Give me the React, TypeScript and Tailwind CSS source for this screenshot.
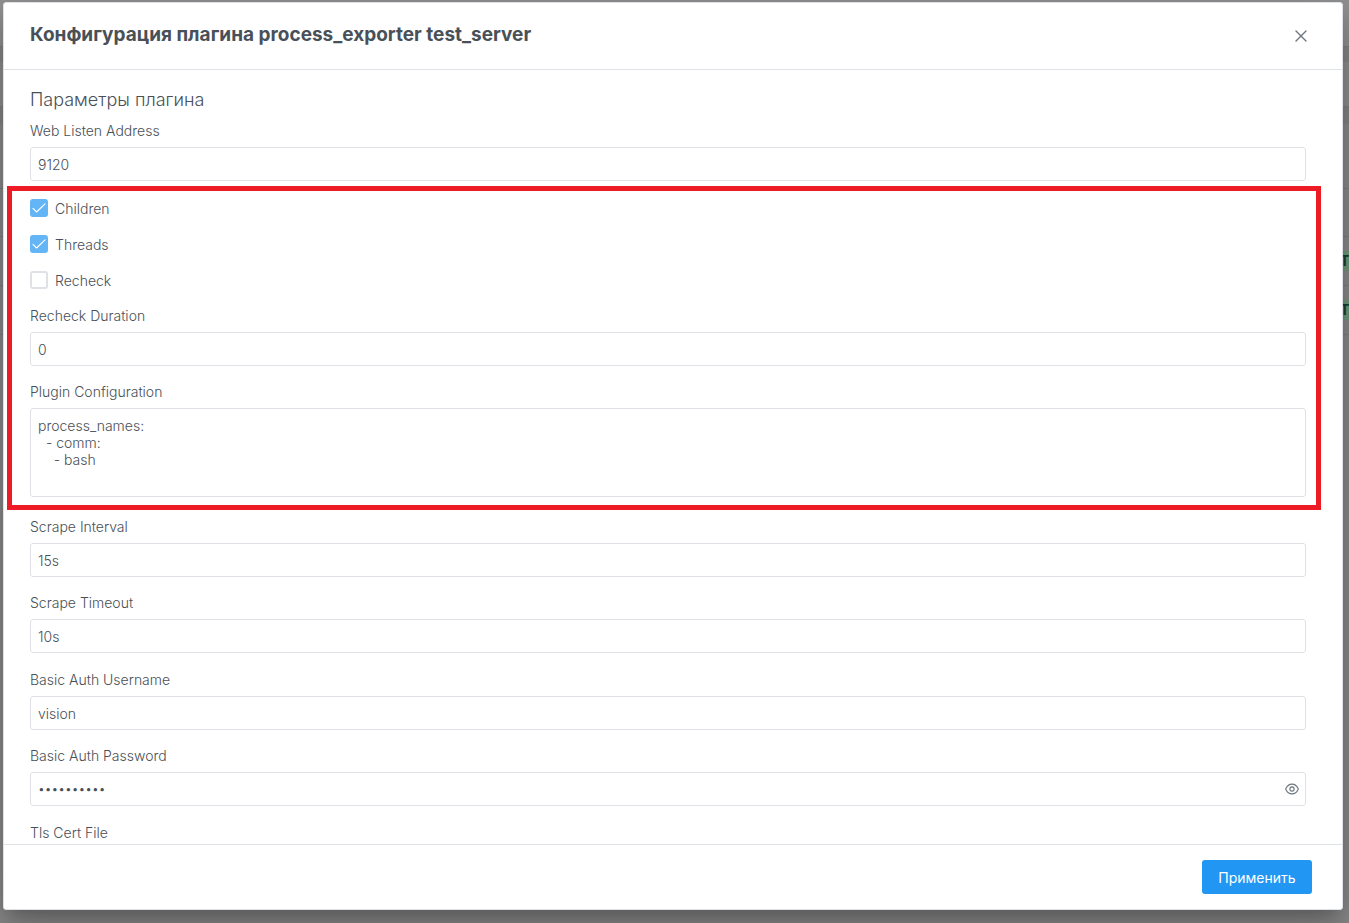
import { useState } from "react";

const inputClass =
  "block h-[34px] w-full rounded-[3px] border border-[#dee2e6] bg-white px-[7px] text-[14px] text-[#495057] outline-none";

function Field({ id, label, value }: { id: string; label: string; value: string }) {
  return (
    <div>
      <label htmlFor={id} className="mb-[6px] block leading-5">
        {label}
      </label>
      <input id={id} type="text" defaultValue={value} className={inputClass} />
    </div>
  );
}

function Check({ label, checked = false }: { label: string; checked?: boolean }) {
  return (
    <label className="flex h-[18px] w-fit items-center gap-[7px]">
      <span className="grid size-[18px]">
        <input
          type="checkbox"
          defaultChecked={checked}
          className="peer col-start-1 row-start-1 size-[18px] appearance-none rounded-[3px] border-2 border-[#dee2e6] bg-white checked:border-[#64b5f6] checked:bg-[#64b5f6]"
        />
        <svg
          viewBox="0 0 18 18"
          className="pointer-events-none invisible col-start-1 row-start-1 size-[18px] peer-checked:visible"
          fill="none"
          stroke="#fff"
          strokeWidth="1.1"
          strokeLinecap="round"
          strokeLinejoin="round"
        >
          <path d="M3 9.3 L6.6 13 L15 4.8" />
        </svg>
      </span>
      {label}
    </label>
  );
}

function Backdrop() {
  return (
    <div className="absolute inset-0 flex flex-col overflow-hidden bg-[#8c8c8c] text-right text-[14px] font-bold text-[#14432f]">
      <div className="h-[47px] shrink-0 border-b border-[#828282] bg-[#939393]" />
      <div className="h-[15px] shrink-0 bg-[#88888b]" />
      <div className="h-[45px] shrink-0 border-b border-[#828282] bg-[#909090]" />
      <div className="h-[17px] shrink-0 bg-[#868689]" />
      <div className="h-[65px] shrink-0 border-b border-[#808080]" />
      <div className="h-[48px] shrink-0 border-b border-[#808080]" />
      {["a", "b"].map((row) => (
        <div key={row} className="flex h-[49px] shrink-0 items-center justify-end border-b border-[#808080]">
          <span className="h-5 w-[9px] overflow-hidden bg-[#709a7e] text-left leading-5">Т</span>
        </div>
      ))}
    </div>
  );
}

export default function App() {
  const [visible, setVisible] = useState(false);

  return (
    <div className="relative flex h-screen font-['Inter',sans-serif] text-[14px] text-[#495057]">
      <Backdrop />
      <div
        role="dialog"
        aria-labelledby="title"
        className="relative mt-[2px] mr-[6px] mb-[13px] ml-[3px] flex min-w-0 flex-1 flex-col overflow-hidden rounded-[3px] border border-[#dee2e6] bg-white shadow-[0_11px_15px_-7px_rgba(0,0,0,0.2),0_24px_38px_3px_rgba(0,0,0,0.14),0_9px_46px_8px_rgba(0,0,0,0.12)]"
      >
        <header className="flex h-[67px] shrink-0 items-center justify-between border-b border-[#dee2e6] pr-[33px] pl-[26px]">
          <h1 id="title" className="pb-[2px] text-[19px] font-bold">
            Конфигурация плагина process_exporter test_server
          </h1>
          <button type="button" aria-label="Закрыть" className="flex size-4 items-center justify-center text-[#6c757d]">
            <svg viewBox="0 0 12 12" className="size-3" fill="none" stroke="currentColor" strokeWidth="1.4" strokeLinecap="round">
              <path d="M1 1 L11 11 M11 1 L1 11" />
            </svg>
          </button>
        </header>

        <main className="min-h-0 flex-1 overflow-hidden pt-[18px] pr-[36px] pl-[26px] font-light">
          <h2 className="mb-[9px] text-[18px] leading-6">Параметры плагина</h2>
          <Field id="listen" label="Web Listen Address" value="9120" />

          <section className="relative mt-[18px]">
            <div className="pointer-events-none absolute -top-[13px] -right-[15px] -bottom-[13px] -left-[23px] border-[5px] border-[#ed1c24]" />
            <div className="mb-[17px] space-y-[18px]">
              <Check label="Children" checked />
              <Check label="Threads" checked />
              <Check label="Recheck" />
            </div>
            <Field id="recheck" label="Recheck Duration" value="0" />
            <label htmlFor="config" className="mt-4 mb-[6px] block leading-5">
              Plugin Configuration
            </label>
            <textarea
              id="config"
              defaultValue={"process_names:\n  - comm:\n    - bash"}
              className="block h-[89px] w-full resize-none rounded-[3px] border border-[#dee2e6] px-[7px] py-2 leading-[17px] outline-none"
            />
          </section>

          <div className="mt-5 space-y-[17px]">
            <div className="space-y-4">
              <Field id="interval" label="Scrape Interval" value="15s" />
              <Field id="timeout" label="Scrape Timeout" value="10s" />
            </div>
            <div className="space-y-4">
              <Field id="username" label="Basic Auth Username" value="vision" />
              <div>
                <label htmlFor="password" className="mb-[6px] block leading-5">
                  Basic Auth Password
                </label>
                <div className="flex h-[34px] items-center rounded-[3px] border border-[#dee2e6] pr-[6px] pl-[7px]">
                  <input
                    id="password"
                    type={visible ? "text" : "password"}
                    defaultValue="vision1234"
                    className="min-w-0 flex-1 text-[12px] outline-none"
                  />
                  <button type="button" aria-label="Показать пароль" onClick={() => setVisible(!visible)} className="text-[#6c757d]">
                    <svg viewBox="0 0 14 14" className="size-[14px]" fill="none" stroke="currentColor" strokeWidth="1.1">
                      <path d="M0.6 7 C2 4 4.2 2.1 7 2.1 S12 4 13.4 7 C12 10 9.8 11.9 7 11.9 S2 10 0.6 7 Z" />
                      <circle cx="7" cy="7" r="2.1" />
                    </svg>
                  </button>
                </div>
              </div>
            </div>
            <Field id="cert" label="Tls Cert File" value="" />
          </div>
        </main>

        <footer className="flex h-[65px] shrink-0 items-center justify-end border-t border-[#dee2e6] pr-[30px]">
          <button type="button" className="h-[34px] min-w-[110px] rounded-[3px] bg-[#2196f3] px-4 text-[14px] text-white">
            Применить
          </button>
        </footer>
      </div>
    </div>
  );
}
